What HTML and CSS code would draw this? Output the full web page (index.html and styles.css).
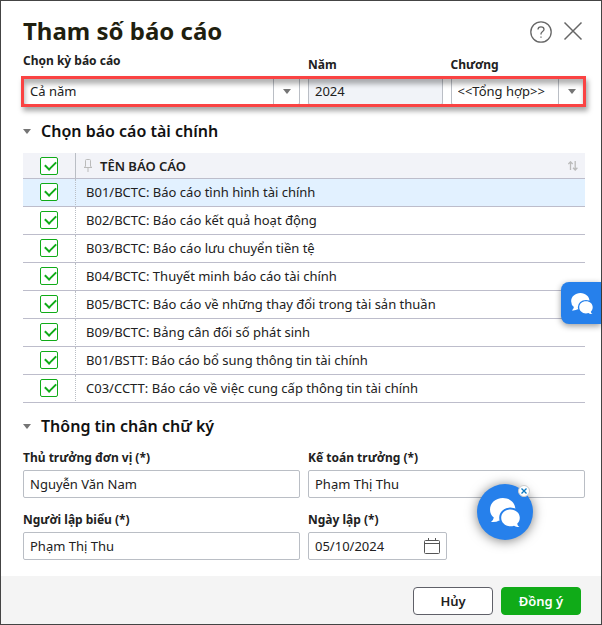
FILE: index.html
```
<!DOCTYPE html>
<html lang="vi">
<head>
    <meta charset="UTF-8">
    <meta name="viewport" content="width=device-width, initial-scale=1.0">
    <title>Tham số báo cáo</title>
    <link rel="stylesheet" href="styles.css">
</head>
<body>
    <div class="dialog">
        <div class="content">
            <div class="header">
                <h1>Tham số báo cáo</h1>
                <div class="header-actions">
                    <button class="icon-button" type="button" aria-label="Trợ giúp">
                        <svg width="24" height="24" viewBox="0 0 24 24" fill="none" stroke="#666" stroke-width="1.3">
                            <circle cx="12" cy="13" r="10.2"/>
                            <path d="M9 10.6C9 8.8 10.2 7.8 12 7.8s3 1 3 2.6c0 2-3 2.2-3 4.4v.6"/>
                            <path d="M12 17.4v1.4"/>
                        </svg>
                    </button>
                    <button class="icon-button" type="button" aria-label="Đóng">
                        <svg width="24" height="24" viewBox="0 0 24 24" fill="none" stroke="#666" stroke-width="1.5">
                            <path d="M3.5 3.5l17 17M20.5 3.5l-17 17"/>
                        </svg>
                    </button>
                </div>
            </div>

            <div class="period">
                <div class="form-group wide period-range">
                    <label for="period">Chọn kỳ báo cáo</label>
                    <div class="select-box">
                        <select id="period">
                            <option selected>Cả năm</option>
                        </select>
                    </div>
                </div>
                <div class="form-group">
                    <label for="year">Năm</label>
                    <input type="text" id="year" value="2024" readonly>
                </div>
                <div class="form-group">
                    <label for="chapter">Chương</label>
                    <div class="select-box">
                        <select id="chapter">
                            <option selected>&lt;&lt;Tổng hợp&gt;&gt;</option>
                        </select>
                    </div>
                </div>
                <div class="highlight"></div>
            </div>

            <h2>Chọn báo cáo tài chính</h2>
            <table class="reports">
                <thead>
                    <tr>
                        <th class="check-cell"><input type="checkbox" aria-label="Chọn tất cả" checked></th>
                        <th>
                            <div class="column-title">
                                <svg width="8" height="14" viewBox="0 0 8 14" fill="none" stroke="#bbb">
                                    <path d="M1.5 7V1.5Q1.5 .5 2.5 .5h3q1 0 1 1V7M0 8.5h8M1.5 7L.5 8.5M6.5 7l1 1.5M4 8.5V13"/>
                                </svg>
                                <span>TÊN BÁO CÁO</span>
                                <svg class="sort-icon" width="10" height="10" viewBox="0 0 10 10" fill="none" stroke="#bbb" stroke-width="1.3">
                                    <path d="M2.5 9V.8M.3 3L2.5 .8 4.7 3M7.2 0v8.8M5 6.8l2.2 2.2 2.2-2.2"/>
                                </svg>
                            </div>
                        </th>
                    </tr>
                </thead>
                <tbody>
                    <tr class="selected">
                        <td class="check-cell"><input type="checkbox" id="r1" checked></td>
                        <td><label for="r1">B01/BCTC: Báo cáo tình hình tài chính</label></td>
                    </tr>
                    <tr>
                        <td class="check-cell"><input type="checkbox" id="r2" checked></td>
                        <td><label for="r2">B02/BCTC: Báo cáo kết quả hoạt động</label></td>
                    </tr>
                    <tr>
                        <td class="check-cell"><input type="checkbox" id="r3" checked></td>
                        <td><label for="r3">B03/BCTC: Báo cáo lưu chuyển tiền tệ</label></td>
                    </tr>
                    <tr>
                        <td class="check-cell"><input type="checkbox" id="r4" checked></td>
                        <td><label for="r4">B04/BCTC: Thuyết minh báo cáo tài chính</label></td>
                    </tr>
                    <tr>
                        <td class="check-cell"><input type="checkbox" id="r5" checked></td>
                        <td><label for="r5">B05/BCTC: Báo cáo về những thay đổi trong tài sản thuần</label></td>
                    </tr>
                    <tr>
                        <td class="check-cell"><input type="checkbox" id="r6" checked></td>
                        <td><label for="r6">B09/BCTC: Bảng cân đối số phát sinh</label></td>
                    </tr>
                    <tr>
                        <td class="check-cell"><input type="checkbox" id="r7" checked></td>
                        <td><label for="r7">B01/BSTT: Báo cáo bổ sung thông tin tài chính</label></td>
                    </tr>
                    <tr>
                        <td class="check-cell"><input type="checkbox" id="r8" checked></td>
                        <td><label for="r8">C03/CCTT: Báo cáo về việc cung cấp thông tin tài chính</label></td>
                    </tr>
                </tbody>
            </table>

            <h2>Thông tin chân chữ ký</h2>
            <div class="signers">
                <div class="form-group wide">
                    <label for="head">Thủ trưởng đơn vị (*)</label>
                    <input type="text" id="head" value="Nguyễn Văn Nam">
                </div>
                <div class="form-group wide">
                    <label for="accountant">Kế toán trưởng (*)</label>
                    <input type="text" id="accountant" value="Phạm Thị Thu">
                </div>
                <div class="form-group wide">
                    <label for="preparer">Người lập biểu (*)</label>
                    <input type="text" id="preparer" value="Phạm Thị Thu">
                </div>
                <div class="form-group wide">
                    <label for="date">Ngày lập (*)</label>
                    <div class="date-box">
                        <input type="text" id="date" value="05/10/2024">
                        <button class="icon-button" type="button" aria-label="Chọn ngày">
                            <svg width="16" height="16" viewBox="0 0 16 16" fill="none" stroke="#555">
                                <path d="M1.5 2.5h13q1 0 1 1v11q0 1-1 1h-13q-1 0-1-1v-11q0-1 1-1zM.5 5.5h15M4.5 0v2.5M11.5 0v2.5"/>
                            </svg>
                        </button>
                    </div>
                </div>
            </div>
        </div>

        <div class="footer">
            <button class="button" type="button">Hủy</button>
            <button class="button primary" type="button">Đồng ý</button>
        </div>

        <button class="chat-tab" type="button" aria-label="Trò chuyện">
            <svg width="22" height="21" viewBox="0 0 30 29">
                <path class="bubble" d="M12.8 0C20 0 25.4 5 25.4 11.5S20 23 12.8 23q-2 0-3.6-.5Q6 24.5 1 24q2.5-2 2.8-4.5Q0 16.5 0 11.5C0 5 5.6 0 12.8 0z"/>
                <path class="bubble outlined" d="M20.5 11.5c5.4 0 9.3 3.6 9.3 8.3 0 2.5-1 4.5-2.6 6Q27.5 28 29.5 29q-3.5.3-5.5-1.3-1.6.6-3.5.6c-5.4 0-9.3-3.8-9.3-8.5s3.9-8.3 9.3-8.3z"/>
            </svg>
        </button>

        <div class="chat-bubble">
            <button class="chat-open" type="button" aria-label="Mở trò chuyện">
                <svg width="30" height="29" viewBox="0 0 30 29">
                    <path class="bubble" d="M12.8 0C20 0 25.4 5 25.4 11.5S20 23 12.8 23q-2 0-3.6-.5Q6 24.5 1 24q2.5-2 2.8-4.5Q0 16.5 0 11.5C0 5 5.6 0 12.8 0z"/>
                    <path class="bubble outlined" d="M20.5 11.5c5.4 0 9.3 3.6 9.3 8.3 0 2.5-1 4.5-2.6 6Q27.5 28 29.5 29q-3.5.3-5.5-1.3-1.6.6-3.5.6c-5.4 0-9.3-3.8-9.3-8.5s3.9-8.3 9.3-8.3z"/>
                </svg>
            </button>
            <button class="chat-close" type="button" aria-label="Ẩn trò chuyện">
                <svg width="6" height="6" viewBox="0 0 6 6" stroke="#0b78c0" stroke-width="1.3">
                    <path d="M.5 .5l5 5M5.5 .5l-5 5"/>
                </svg>
            </button>
        </div>
    </div>
</body>
</html>
```
FILE: styles.css
```
* {
    box-sizing: border-box;
}

body {
    margin: 0;
    font-family: 'Noto Sans', 'Open Sans', sans-serif;
    font-size: 13px;
    line-height: 18px;
    color: #212121;
}

button,
input,
select {
    font: inherit;
    color: inherit;
}

button {
    cursor: pointer;
}

.dialog {
    position: relative;
    display: flex;
    flex-direction: column;
    min-height: 100vh;
    border: 1px solid #444;
    background: #fff;
}

.content {
    flex: 1;
    padding: 12px 16px 15px 22px;
}

.header {
    display: flex;
    justify-content: space-between;
    align-items: center;
    margin-bottom: 3px;
}

h1 {
    margin: 0;
    font-size: 24px;
    font-weight: 700;
    line-height: 36px;
    color: #1f1f0f;
}

.header-actions {
    display: flex;
    gap: 8px;
}

.icon-button {
    display: flex;
    padding: 0;
    border: none;
    background: none;
}

h2 {
    display: flex;
    align-items: center;
    gap: 10px;
    margin: 11px 0 10px;
    font-size: 16px;
    font-weight: 600;
    line-height: 24px;
    color: #111;
}

h2::before {
    content: "";
    border: 4px solid transparent;
    border-top: 5px solid #757575;
    border-bottom: none;
}

.period,
.signers {
    position: relative;
    display: grid;
    grid-template-columns: repeat(4, 1fr);
    gap: 13px 8px;
    align-items: end;
}

.period {
    margin-bottom: 14px;
}

.signers {
    margin-top: 11px;
}

.form-group {
    display: flex;
    flex-direction: column;
    gap: 3px;
    min-width: 0;
}

.period-range {
    gap: 7px;
}

.wide {
    grid-column: span 2;
}

.form-group label {
    font-size: 12px;
    font-weight: 700;
}

.form-group input,
.form-group select {
    width: 100%;
    height: 28px;
    padding: 0 6px;
    border: 1px solid #babec5;
    border-radius: 2px;
    background: #fff;
    appearance: none;
}

.form-group input[readonly] {
    background: #f1f3f8;
}

.select-box {
    position: relative;
}

.select-box::before {
    content: "";
    position: absolute;
    top: 0;
    right: 26px;
    height: 28px;
    border-left: 1px solid #babec5;
}

.select-box::after {
    content: "";
    position: absolute;
    top: 12px;
    right: 9px;
    border: 4px solid transparent;
    border-top: 5px solid #757575;
    border-bottom: none;
    pointer-events: none;
}

/* Marks the period row */
.highlight {
    position: absolute;
    left: -2px;
    right: -1px;
    bottom: -2px;
    height: 31px;
    border: 3px solid #fa4343;
    box-shadow: 2px 4px 5px rgba(0, 0, 0, 0.35), inset 1px 5px 5px rgba(0, 0, 0, 0.3);
    pointer-events: none;
}

.reports {
    width: 100%;
    border-collapse: separate;
    border-spacing: 0;
}

.reports th,
.reports td {
    height: 28px;
    padding: 0 7px 2px 10px;
    border-bottom: 1px solid #bdbdcb;
    text-align: left;
}

.reports th {
    height: 26px;
    padding: 0 7px 0 8px;
    background: #f2f3f8;
    font-weight: 600;
}

.reports .check-cell {
    width: 53px;
    padding-left: 0;
    padding-right: 0;
    border-right: 1px dotted #babec5;
    text-align: center;
}

.reports th.check-cell {
    border-right-style: solid;
}

.reports .selected td {
    background: #e2f1ff;
}

.reports input {
    display: block;
    position: relative;
    width: 18px;
    height: 18px;
    margin: 0 auto;
    border: 1px solid #10ab18;
    border-radius: 2px;
    background: #fff;
    appearance: none;
}

.reports input:checked::after {
    content: "";
    position: absolute;
    left: 4px;
    top: 4px;
    width: 9px;
    height: 5px;
    border: solid #10ab18;
    border-width: 0 0 2px 2px;
    transform: translateY(-1px) rotate(-45deg);
}

.column-title {
    display: flex;
    align-items: center;
    gap: 8px;
}

.sort-icon {
    margin-left: auto;
}

.date-box {
    position: relative;
    width: 50%;
}

.date-box .icon-button {
    position: absolute;
    top: 6px;
    right: 7px;
}

.footer {
    display: flex;
    justify-content: flex-end;
    gap: 8px;
    padding: 11px 20px 9px;
    background: #f4f4f4;
}

.button {
    width: 80px;
    height: 28px;
    padding: 0;
    border: 1px solid #5f6068;
    border-radius: 4px;
    background: #fff;
    font-weight: 600;
}

.primary {
    border-color: #10ab18;
    background: #10ab18;
    color: #fff;
}

.bubble {
    fill: #fff;
}

.outlined {
    stroke: #2680eb;
    stroke-width: 4px;
    paint-order: stroke;
}

.chat-tab {
    position: absolute;
    top: 281px;
    right: 0;
    display: flex;
    align-items: center;
    padding: 0 8px 0 10px;
    width: 40px;
    height: 42px;
    border: none;
    border-radius: 8px 0 0 8px;
    background: #2680eb;
    box-shadow: 0 2px 6px rgba(0, 0, 0, 0.4);
}

.chat-bubble {
    position: absolute;
    right: 68px;
    bottom: 84px;
}

.chat-open {
    display: flex;
    align-items: center;
    justify-content: center;
    width: 56px;
    height: 56px;
    padding: 0;
    border: none;
    border-radius: 50%;
    background: #2680eb;
    box-shadow: 0 1px 12px rgba(0, 0, 0, 0.5);
}

.chat-close {
    position: absolute;
    top: 1px;
    right: 3px;
    display: flex;
    align-items: center;
    justify-content: center;
    width: 12px;
    height: 12px;
    padding: 0;
    border: 1px solid #ccc;
    border-radius: 50%;
    background: #fff;
}
```
